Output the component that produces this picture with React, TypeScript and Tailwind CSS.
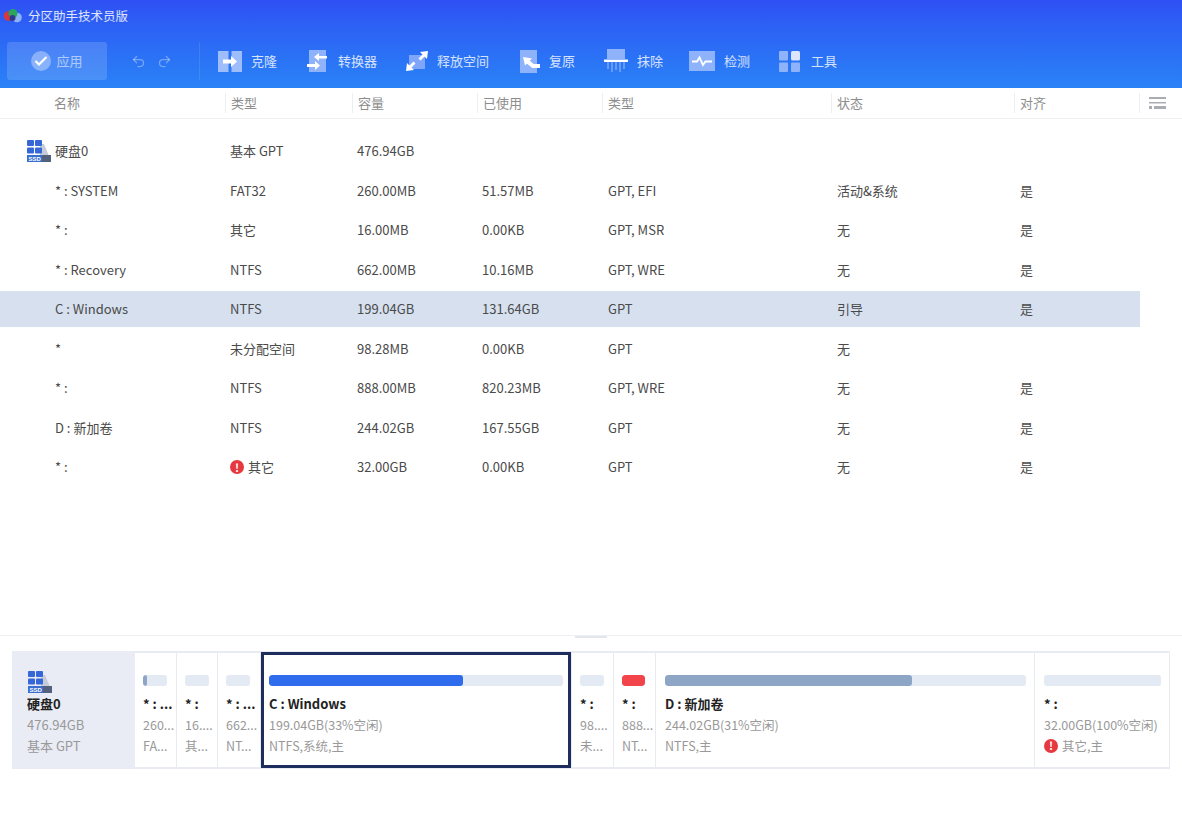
import { Redo2, Undo2 } from "lucide-react";

const font = "font-['Noto_Sans_CJK_SC','Noto_Sans',sans-serif]";

function Logo() {
  return (
    <svg width="20" height="16" viewBox="0 0 20 16">
      <circle cx="5.500" cy="8" r="4.800" fill="#d9363e" />
      <circle cx="14" cy="9.500" r="4.800" fill="#8db2f8" />
      <circle cx="10" cy="5.500" r="4.500" fill="#2aa55c" />
      <circle cx="9.500" cy="10" r="3" fill="#33388f" />
    </svg>
  );
}

function DiskIcon() {
  return (
    <svg width="25" height="24" viewBox="0 0 25 24">
      <path d="M14 5h4l5 12H14z" fill="#c5cbd8" />
      <rect x="1" y="1" width="7" height="6" rx="1" fill="#3567d8" />
      <rect x="9" y="1" width="7" height="6" rx="1" fill="#3567d8" />
      <rect x="1" y="8.500" width="7" height="6" rx="1" fill="#3567d8" />
      <rect x="9" y="8.500" width="7" height="6" rx="1" fill="#3567d8" />
      <rect x="1" y="16" width="24" height="7" fill="#53617c" />
      <rect x="1" y="16" width="15" height="7" fill="#3a6fd0" />
      <text x="2.500" y="22" fontSize="6" fontWeight="700" fill="#fff" fontFamily="Liberation Sans">SSD</text>
    </svg>
  );
}

function ErrorIcon() {
  return (
    <span className="inline-flex h-[14px] w-[14px] shrink-0 items-center justify-center rounded-full bg-[#e5393f] text-[11px] font-bold leading-none text-white">
      !
    </span>
  );
}

function CloneIcon() {
  return (
    <svg width="24" height="21" viewBox="0 0 24 21">
      <rect x="0" y="0" width="10.500" height="21" fill="#9dbdfb" />
      <rect x="13.500" y="0" width="10.500" height="21" fill="#9dbdfb" />
      <path d="M5 8.500h8V5l6 5.500-6 5.500v-3.500H5z" fill="#fff" />
    </svg>
  );
}

function ConvertIcon() {
  return (
    <svg width="21" height="22" viewBox="0 0 21 22">
      <rect x="2" y="0" width="17" height="22" fill="#8fb3fb" />
      <path d="M20 6h-8V3L7 7l5 4V8.500h8z" fill="#fff" />
      <path d="M0 14h8v-3l5 4.500L8 20v-3H0z" fill="#fff" />
    </svg>
  );
}

function ExpandIcon() {
  return (
    <svg width="24" height="20" viewBox="0 0 24 20">
      <path d="M4 4h16v14H4z" fill="#7fa6fa" />
      <path d="M23 0l-1 8-2.500-2.500-4 4-2-2 4-4L15 1z" fill="#fff" />
      <path d="M1 20l1-8 2.500 2.500 4-4 2 2-4 4L9 19z" fill="#fff" />
    </svg>
  );
}

function RestoreIcon() {
  return (
    <svg width="21" height="23" viewBox="0 0 21 23">
      <rect x="0" y="0" width="17" height="23" fill="#8fb3fb" />
      <path d="M3 7l9 1.500-7 7z" fill="#fff" />
      <path d="M7 11l6 5h7" fill="none" stroke="#fff" strokeWidth="4" />
    </svg>
  );
}

function ShredIcon() {
  return (
    <svg width="24" height="24" viewBox="0 0 24 24">
      <rect x="3" y="0" width="18" height="10" fill="#8fb3fb" />
      <rect x="0" y="10.500" width="24" height="2.500" fill="#fff" />
      <path d="M4 13v7M8 13v10M12 13v8M16 13v10M20 13v7" stroke="#8fb3fb" strokeWidth="1.200" />
    </svg>
  );
}

function CheckIcon() {
  return (
    <svg width="26" height="20" viewBox="0 0 26 20">
      <rect x="0" y="0" width="26" height="20" fill="#8fb3fb" />
      <path d="M3 10.500h5l2.500-4 3.500 7.500 2.500-3.500h6.500" fill="none" stroke="#fff" strokeWidth="1.800" />
    </svg>
  );
}

function ToolsIcon() {
  return (
    <svg width="21" height="21" viewBox="0 0 21 21">
      <rect x="0" y="0" width="9" height="9.500" rx="1" fill="#8fb3fb" />
      <rect x="12" y="0" width="9" height="9.500" rx="1.500" fill="#dbe6fe" />
      <rect x="0" y="11.500" width="9" height="9.500" rx="1" fill="#8fb3fb" />
      <rect x="12" y="11.500" width="9" height="9.500" rx="1" fill="#8fb3fb" />
    </svg>
  );
}

const tools = [
  { label: "克隆", icon: <CloneIcon />, width: "w-[89px]", gap: "gap-[9px]" },
  { label: "转换器", icon: <ConvertIcon />, width: "w-[98px]", gap: "gap-[10px]" },
  { label: "释放空间", icon: <ExpandIcon />, width: "w-[115px]", gap: "gap-[8px]" },
  { label: "复原", icon: <RestoreIcon />, width: "w-[84px]", gap: "gap-[8px]" },
  { label: "抹除", icon: <ShredIcon />, width: "w-[85px]", gap: "gap-[9px]" },
  { label: "检测", icon: <CheckIcon />, width: "w-[90px]", gap: "gap-[9px]" },
  { label: "工具", icon: <ToolsIcon />, width: "w-[80px]", gap: "gap-[11px]" },
];

const cols = "grid grid-cols-[225px_127px_125px_125px_229px_183px_125px_43px]";

const headers = ["类型", "容量", "已使用", "类型", "状态", "对齐"];

const rows = [
  ["* : SYSTEM", "FAT32", "260.00MB", "51.57MB", "GPT, EFI", "活动&系统", "是"],
  ["* :", "其它", "16.00MB", "0.00KB", "GPT, MSR", "无", "是"],
  ["* : Recovery", "NTFS", "662.00MB", "10.16MB", "GPT, WRE", "无", "是"],
  ["C : Windows", "NTFS", "199.04GB", "131.64GB", "GPT", "引导", "是"],
  ["*", "未分配空间", "98.28MB", "0.00KB", "GPT", "无", ""],
  ["* :", "NTFS", "888.00MB", "820.23MB", "GPT, WRE", "无", "是"],
  ["D : 新加卷", "NTFS", "244.02GB", "167.55GB", "GPT", "无", "是"],
  ["* :", "其它", "32.00GB", "0.00KB", "GPT", "无", "是"],
];

const parts = [
  { name: "* : ...", size: "260...", info: "FA...", width: "w-[40.500px]", pad: "pl-[8px]", bar: "w-[24px]", fill: "w-[4px]", color: "bg-[#8ea6c6]" },
  { name: "* :", size: "16....", info: "其...", width: "w-[39.500px]", pad: "pl-[8px]", bar: "w-[24px]", fill: "w-0", color: "" },
  { name: "* : ...", size: "662...", info: "NT...", width: "w-[41.500px]", pad: "pl-[8px]", bar: "w-[24px]", fill: "w-0", color: "" },
  { name: "C : Windows", size: "199.04GB(33%空闲)", info: "NTFS,系统,主", width: "w-[309.500px]", pad: "pl-[8px]", bar: "w-[294px]", fill: "w-[194px]", color: "bg-[#2f6bed]", active: true },
  { name: "* :", size: "98....", info: "未...", width: "w-[40.500px]", pad: "pl-[8px]", bar: "w-[24px]", fill: "w-0", color: "" },
  { name: "* :", size: "888...", info: "NT...", width: "w-[40.500px]", pad: "pl-[8px]", bar: "w-[23px]", fill: "w-[23px]", color: "bg-[#f2444a]" },
  { name: "D : 新加卷", size: "244.02GB(31%空闲)", info: "NTFS,主", width: "w-[377.500px]", pad: "pl-[9px]", bar: "w-[361px]", fill: "w-[247px]", color: "bg-[#8ea6c6]" },
  { name: "* :", size: "32.00GB(100%空闲)", info: "其它,主", width: "w-[133.500px]", pad: "pl-[9px]", bar: "w-[117px]", fill: "w-0", color: "", error: true },
];

export default function App() {
  return (
    <div className={`${font} min-h-[833px] w-[1182px] overflow-hidden bg-white text-[13px] text-[#4a4a4a]`}>
      {/* Header */}
      <div className="h-[88px] bg-gradient-to-b from-[#2f50f4] to-[#2a82f6]">
        <div className="flex h-[32px] items-center gap-[5px] pl-[3px] text-[12.500px] text-white/85">
          <Logo />
          分区助手技术员版
        </div>
        <div className="flex items-center pl-[7px] pt-[10px]">
          <div className="flex h-[38px] w-[100px] items-center justify-center gap-[5px] rounded-[3px] bg-white/15 text-[13px] text-white/55">
            <span className="flex h-[20px] w-[20px] items-center justify-center rounded-full bg-white/35">
              <svg width="14" height="12" viewBox="0 0 14 12">
                <path d="M1.500 6l3.500 3.500L12.500 2" fill="none" stroke="#fff" strokeWidth="2.200" />
              </svg>
            </span>
            应用
          </div>
          <div className="flex w-[92px] items-center gap-[11px] pl-[24px] text-white/35">
            <Undo2 size={15} />
            <Redo2 size={15} />
          </div>
          <div className="h-[38px] w-px bg-white/10" />
          <div className="flex items-center pl-[18px]">
            {tools.map((t) => (
              <div key={t.label} className={`flex shrink-0 items-center text-[13px] text-white/80 ${t.width} ${t.gap}`}>
                {t.icon}
                {t.label}
              </div>
            ))}
          </div>
        </div>
      </div>

      {/* Table header */}
      <div className={`${cols} h-[31px] items-center border-b border-[#eef0f3] text-[13px] text-[#8d8d8d]`}>
        <div className="pl-[54px]">名称</div>
        {headers.map((h, i) => (
          <div key={i} className="flex h-[20px] items-center border-l border-[#eceef2] pl-[5px]">
            {h}
          </div>
        ))}
        <div className="flex h-[20px] items-center border-l border-[#eceef2] pl-[9px]">
          <svg width="17" height="13" viewBox="0 0 17 13" fill="#a9adb3">
            <rect width="17" height="2" />
            <rect y="5" width="17" height="1.500" />
            <rect y="9" width="3" height="3" />
            <rect x="5" y="9" width="12" height="3" />
          </svg>
        </div>
      </div>

      {/* Rows */}
      <div className="h-[516px] pt-[14px]">
        <div className={`${cols} mb-[3.500px] h-[36px] items-center`}>
          <div className="flex items-center gap-[4px] pl-[26px]">
            <DiskIcon />
            硬盘0
          </div>
          <div className="pl-[5px]">基本 GPT</div>
          <div className="pl-[5px]">476.94GB</div>
        </div>
        {rows.map((r, i) => (
          <div
            key={i}
            className={`${cols} mb-[3.500px] h-[36px] items-center ${r[0] === "C : Windows" ? "w-[1140px] bg-[#d6e0ef]" : ""}`}
          >
            <div className="pl-[55px]">{r[0]}</div>
            <div className="flex items-center gap-[4px] pl-[5px]">
              {i === 7 && <ErrorIcon />}
              {r[1]}
            </div>
            <div className="pl-[5px]">{r[2]}</div>
            <div className="pl-[5px]">{r[3]}</div>
            <div className="pl-[6px]">{r[4]}</div>
            <div className="pl-[6px]">{r[5]}</div>
            <div className="pl-[6px]">{r[6]}</div>
          </div>
        ))}
      </div>

      {/* Splitter */}
      <div className="flex h-[2px] justify-center border-t border-[#eef0f3]">
        <div className="h-[2px] w-[32px] bg-[#e3e6ea]" />
      </div>

      {/* Disk map */}
      <div className="mx-[12px] mt-[14px] flex h-[118px] w-[1158px] bg-[#e8ecf2]">
        <div className="w-[123px] shrink-0 bg-[#e9ecf5] pl-[15px] pt-[19px] text-[13px] text-[#999]">
          <DiskIcon />
          <div className="text-[13px] font-bold leading-[19px] text-[#222]">硬盘0</div>
          <div className="mt-[1px] leading-[21px]">476.94GB</div>
          <div className="leading-[21px]">基本 GPT</div>
        </div>
        <div className="flex py-[2px]">
          {parts.map((p, i) => (
            <div
              key={i}
              className={`relative mr-[1.500px] min-w-0 shrink-0 whitespace-nowrap bg-white pt-[22px] text-[12.500px] text-[#999] last:mr-0 ${p.width} ${p.pad}`}
            >
              {p.active && <div className="absolute -inset-y-[1px] inset-x-0 border-[3px] border-[#1d2d5e]" />}
              <div className={`h-[11px] overflow-hidden rounded-[3px] bg-[#e3eaf3] ${p.bar}`}>
                <div className={`h-full rounded-[3px] ${p.fill} ${p.color}`} />
              </div>
              <div className="mt-[8px] text-[13px] font-bold leading-[20px] text-[#222]">{p.name}</div>
              <div className="leading-[21px]">{p.size}</div>
              <div className="flex items-center gap-[4px] leading-[21px]">
                {p.error && <ErrorIcon />}
                <span>{p.info}</span>
              </div>
            </div>
          ))}
        </div>
      </div>
    </div>
  );
}
